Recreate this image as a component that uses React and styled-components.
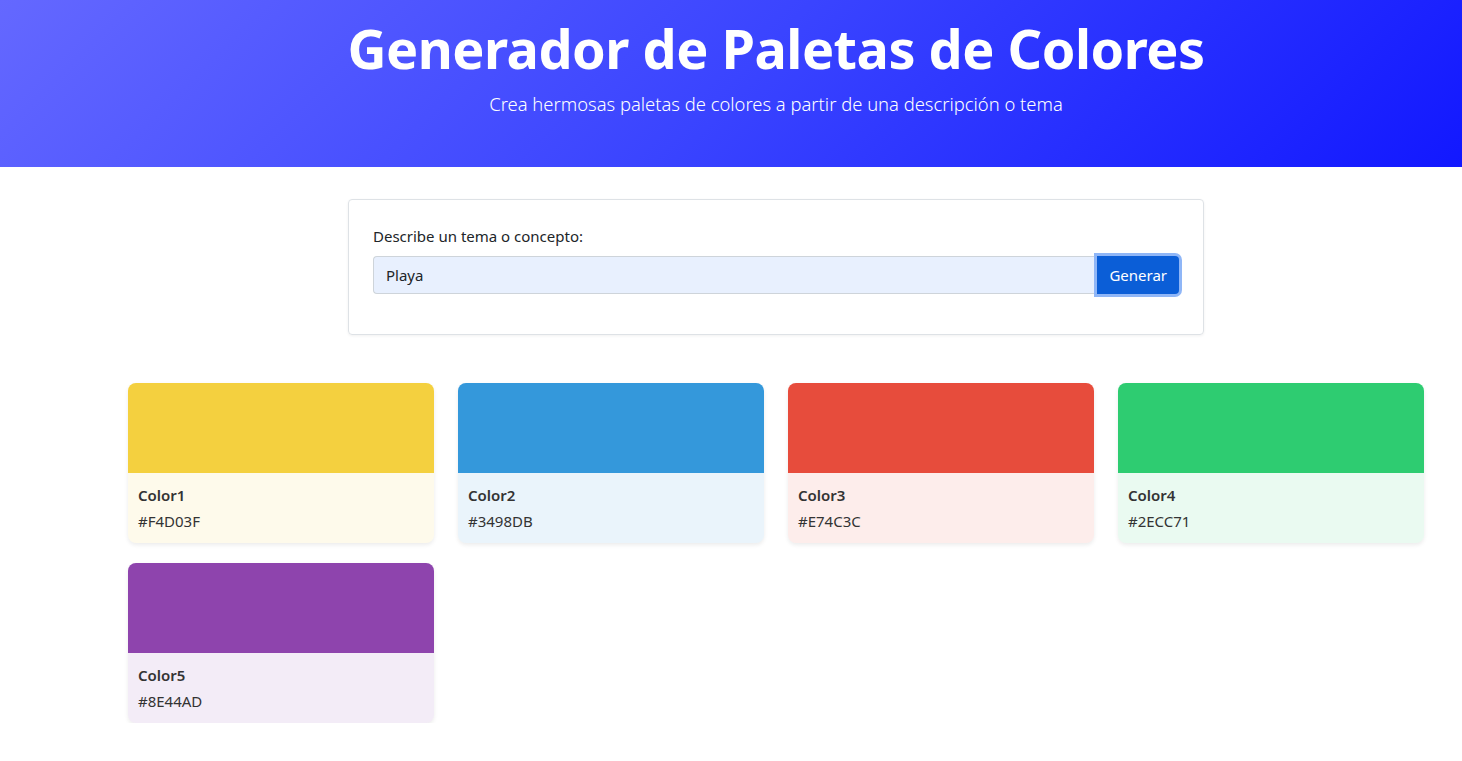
import React, { useState } from "react";
import styled, { createGlobalStyle } from "styled-components";

const GlobalStyle = createGlobalStyle`
  html, body { margin: 0; padding: 0; background: #ffffff; }
  body {
    font-family: "Noto Sans", "Open Sans", "Liberation Sans", sans-serif;
    color: #212529;
    -webkit-font-smoothing: antialiased;
  }
  * { box-sizing: border-box; }
`;

const Header = styled.header`
  height: 167px;
  background: linear-gradient(135deg, #6468ff 0%, #3a44ff 50%, #1218ff 100%);
  color: #ffffff;
  display: flex;
  flex-direction: column;
  align-items: center;
  padding-top: 16px;
  padding-left: 90px;
`;

const Title = styled.h1`
  margin: 0;
  font-size: 54px;
  font-weight: 700;
  line-height: 1.2;
  letter-spacing: -0.5px;
`;

const Subtitle = styled.p`
  margin: 9px 0 0;
  font-size: 18.4px;
  font-weight: 300;
  line-height: 1.5;
`;

const Main = styled.main`
  width: 1296px;
  margin-left: 128px;
  padding-top: 32px;
`;

const FormCard = styled.section`
  width: 856px;
  margin-left: 220px;
  border: 1px solid #dee2e6;
  border-radius: 4px;
  box-shadow: 0 1px 3px rgba(0, 0, 0, 0.06);
  padding: 24px;
`;

const Label = styled.label`
  display: block;
  font-size: 15px;
  margin: 0 0 8px;
  line-height: 24px;
  color: #212529;
`;

const InputGroup = styled.div`
  display: flex;
  margin-bottom: 16px;
`;

const Input = styled.input`
  flex: 1;
  height: 38px;
  border: 1px solid #ced4da;
  border-right: none;
  border-radius: 4px 0 0 4px;
  background: #e8f0fe;
  padding: 0 12px;
  font-family: inherit;
  font-size: 15px;
  color: #212529;
  outline: none;
`;

const Button = styled.button`
  height: 38px;
  padding: 0 12px;
  border: none;
  border-radius: 0 4px 4px 0;
  background: #0b5ed7;
  color: #ffffff;
  font-family: inherit;
  font-size: 15px;
  box-shadow: 0 0 0 3px #8fb6f7;
  position: relative;
  cursor: pointer;
`;

const Grid = styled.div`
  display: grid;
  grid-template-columns: repeat(4, 306px);
  column-gap: 24px;
  row-gap: 20px;
  margin-top: 48px;
`;

const ColorCard = styled.div`
  border-radius: 8px;
  overflow: hidden;
  box-shadow: 0 2px 4px rgba(0, 0, 0, 0.08);
  background: ${(p) => p.$tint};
`;

const Swatch = styled.div`
  height: 90px;
  background: ${(p) => p.$color};
`;

const CardBody = styled.div`
  height: 70px;
  padding: 10px 10px 0;
  color: #333333;
`;

const ColorName = styled.div`
  font-size: 15px;
  font-weight: 600;
  line-height: 24px;
`;

const ColorHex = styled.div`
  font-size: 15px;
  line-height: 24px;
  margin-top: 2px;
`;

const colors = [
  { name: "Color1", hex: "#F4D03F", rgb: [244, 208, 63] },
  { name: "Color2", hex: "#3498DB", rgb: [52, 152, 219] },
  { name: "Color3", hex: "#E74C3C", rgb: [231, 76, 60] },
  { name: "Color4", hex: "#2ECC71", rgb: [46, 204, 113] },
  { name: "Color5", hex: "#8E44AD", rgb: [142, 68, 173] },
];

export default function App() {
  const [value, setValue] = useState("Playa");
  return (
    <>
      <GlobalStyle />
      <Header>
        <Title>Generador de Paletas de Colores</Title>
        <Subtitle>Crea hermosas paletas de colores a partir de una descripción o tema</Subtitle>
      </Header>
      <Main>
        <FormCard>
          <Label htmlFor="tema">Describe un tema o concepto:</Label>
          <InputGroup>
            <Input id="tema" value={value} onChange={(e) => setValue(e.target.value)} />
            <Button type="button">Generar</Button>
          </InputGroup>
        </FormCard>
        <Grid>
          {colors.map((c) => (
            <ColorCard key={c.name} $tint={`rgba(${c.rgb.join(",")},0.1)`}>
              <Swatch $color={c.hex} />
              <CardBody>
                <ColorName>{c.name}</ColorName>
                <ColorHex>{c.hex}</ColorHex>
              </CardBody>
            </ColorCard>
          ))}
        </Grid>
      </Main>
    </>
  );
}
